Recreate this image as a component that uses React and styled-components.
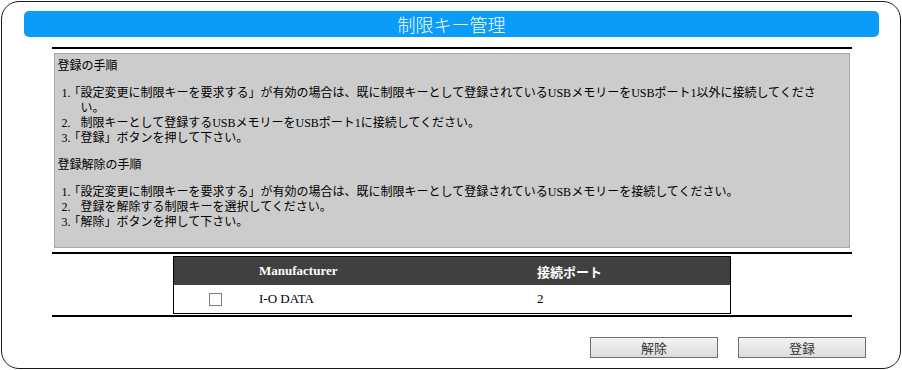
import React from 'react';
import styled, { createGlobalStyle } from 'styled-components';

const GlobalStyle = createGlobalStyle`
  body {
    margin: 0;
    background: #fff;
    font-family: "Liberation Serif", "Noto Sans CJK JP", serif;
    color: #000;
  }
`;

const Frame = styled.div`
  margin: 1px;
  height: 368px;
  box-sizing: border-box;
  border: 1px solid #1a1a1a;
  border-radius: 18px;
  padding: 9px 21px 0 22px;
  display: flex;
  flex-direction: column;
`;

const TitleBar = styled.div`
  height: 26px;
  line-height: 26px;
  background: #0a9cf7;
  border-radius: 5px;
  color: #fff;
  text-align: center;
  font-family: "Noto Sans CJK JP", sans-serif;
  font-weight: 300;
  font-size: 18px;
`;

const Content = styled.div`
  width: 800px;
  margin: 10px auto 0;
`;

const Rule = styled.div`
  height: 2px;
  background: #000;
`;

const InfoBox = styled.div`
  margin: 4px 2px;
  padding: 5px 3px;
  background: #cccccc;
  border: 1px solid #a8a8a8;
  font-size: 12px;
  line-height: 15px;
`;

const Heading = styled.p`
  margin: 0;
`;

const Steps = styled.ol`
  list-style: none;
  counter-reset: step;
  margin: 12px 14px 12px 0;
  padding: 0 0 0 23px;
`;

const Step = styled.li`
  counter-increment: step;

  &::before {
    content: counter(step) ".";
    display: inline-block;
    box-sizing: border-box;
    width: 23px;
    margin-left: -23px;
    margin-right: ${p => (p.$hang ? '-12px' : '0')};
    padding-left: 4px;
  }
`;

const TableWrap = styled.div`
  padding: 2px 0 1px;
`;

const DeviceTable = styled.table`
  width: 558px;
  margin: 0 auto;
  border-collapse: collapse;
  border: 1px solid #000;
  font-size: 13px;
`;

const HeadCell = styled.th`
  height: 28px;
  padding: 0 2px;
  background: #404040;
  color: #fff;
  font-weight: bold;
  text-align: ${p => (p.$center ? 'center' : 'left')};
`;

const Cell = styled.td`
  height: 28px;
  padding: 0 2px;
  text-align: ${p => (p.$center ? 'center' : 'left')};
  vertical-align: middle;
`;

const Check = styled.input.attrs({ type: 'checkbox' })`
  appearance: none;
  display: block;
  width: 13px;
  height: 13px;
  margin: 0 auto;
  box-sizing: border-box;
  border: 1px solid #808080;
  background: #fff;
`;

const ButtonRow = styled.div`
  display: flex;
  justify-content: flex-end;
  gap: 20px;
  margin-top: 20px;
  padding-right: 13px;
`;

const Button = styled.button`
  width: 128px;
  height: 21px;
  padding: 0;
  border: 1px solid #707070;
  background: linear-gradient(#f3f3f3, #dddddd);
  color: #333;
  font-family: "Noto Sans CJK JP", sans-serif;
  font-size: 13px;
  line-height: 19px;
`;

const devices = [{ maker: 'I-O DATA', port: '2' }];

export default function App() {
  return (
    <>
      <GlobalStyle />
      <Frame>
        <TitleBar>制限キー管理</TitleBar>
        <Content>
          <Rule />
          <InfoBox>
            <Heading>登録の手順</Heading>
            <Steps>
              <Step $hang>
                「設定変更に制限キーを要求する」が有効の場合は、既に制限キーとして登録されているUSBメモリーをUSBポート1以外に接続してください。
              </Step>
              <Step>制限キーとして登録するUSBメモリーをUSBポート1に接続してください。</Step>
              <Step $hang>「登録」ボタンを押して下さい。</Step>
            </Steps>
            <Heading>登録解除の手順</Heading>
            <Steps>
              <Step $hang>
                「設定変更に制限キーを要求する」が有効の場合は、既に制限キーとして登録されているUSBメモリーを接続してください。
              </Step>
              <Step>登録を解除する制限キーを選択してください。</Step>
              <Step $hang>「解除」ボタンを押して下さい。</Step>
            </Steps>
          </InfoBox>
          <Rule />
          <TableWrap>
            <DeviceTable>
              <colgroup>
                <col style={{ width: 84 }} />
                <col style={{ width: 278 }} />
                <col />
              </colgroup>
              <thead>
                <tr>
                  <HeadCell />
                  <HeadCell>Manufacturer</HeadCell>
                  <HeadCell>接続ポート</HeadCell>
                </tr>
              </thead>
              <tbody>
                {devices.map(d => (
                  <tr key={d.maker}>
                    <Cell $center>
                      <Check />
                    </Cell>
                    <Cell>{d.maker}</Cell>
                    <Cell>{d.port}</Cell>
                  </tr>
                ))}
              </tbody>
            </DeviceTable>
          </TableWrap>
          <Rule />
        </Content>
        <ButtonRow>
          <Button>解除</Button>
          <Button>登録</Button>
        </ButtonRow>
      </Frame>
    </>
  );
}
